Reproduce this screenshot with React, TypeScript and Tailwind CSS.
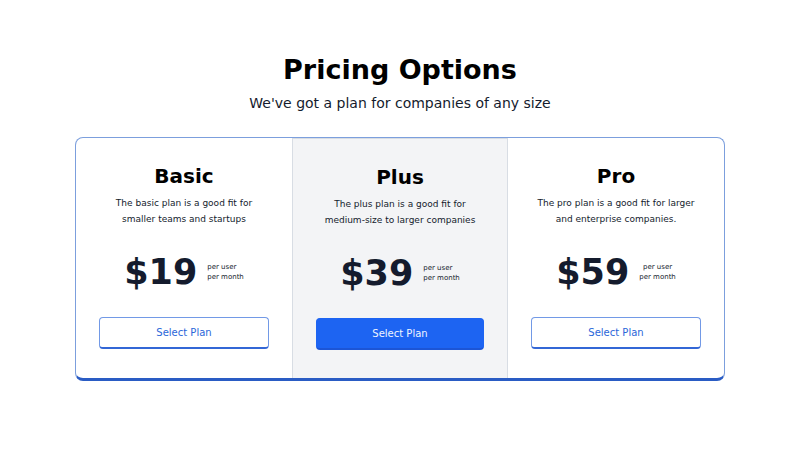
const plans = [
  { name: "Basic", text: ["The basic plan is a good fit for", "smaller teams and startups"], price: "$19", center: false },
  { name: "Plus", text: ["The plus plan is a good fit for", "medium-size to larger companies"], price: "$39", center: false },
  { name: "Pro", text: ["The pro plan is a good fit for larger", "and enterprise companies."], price: "$59", center: true },
];

export default function App() {
  return (
    <main className="px-4 pt-[52px] pb-20 font-['DejaVu_Sans',sans-serif] text-[#141b2d]">
      <header className="text-center">
        <h1 className="text-[27px] leading-[36px] font-bold text-black">Pricing Options</h1>
        <p className="mt-[3px] text-[14px] leading-[24px]">We've got a plan for companies of any size</p>
      </header>
      <section className="mx-auto mt-[22px] grid max-w-[650px] grid-cols-3 overflow-hidden rounded-lg border border-b-[3px] border-[#7c9fdd] border-b-[#2a5cc4]">
        {plans.map((plan) => {
          const featured = plan.name === "Plus";
          return (
            <article
              key={plan.name}
              className={featured ? "border border-b-0 border-[#d8dde4] bg-[#f3f4f6] px-[23px] pt-[23px] pb-7 text-center" : "px-[23px] pt-[23px] pb-7 text-center"}
            >
              <h2 className="text-[20px] leading-[30px] font-bold text-black">{plan.name}</h2>
              <p className="mt-1 text-[9px] leading-[16px] whitespace-nowrap">
                {plan.text[0]}
                <br />
                {plan.text[1]}
              </p>
              <div className="mt-6 flex items-center justify-center gap-[10px]">
                <span className="text-[35px] leading-[42px] font-bold">{plan.price}</span>
                <span className={plan.center ? "text-center text-[7px] leading-[10px]" : "text-left text-[7px] leading-[10px]"}>
                  per user
                  <br />
                  per month
                </span>
              </div>
              <button
                className={
                  featured
                    ? "mt-6 h-8 w-full rounded-sm border border-b-2 border-[#1d64f2] border-b-[#1c55d6] bg-[#1d64f2] text-[10px] text-[#eff4ff]"
                    : "mt-6 h-8 w-full rounded-sm border border-b-2 border-[#7299e6] border-b-[#3367d6] bg-white text-[10px] text-[#2a66d9]"
                }
              >
                Select Plan
              </button>
            </article>
          );
        })}
      </section>
    </main>
  );
}
